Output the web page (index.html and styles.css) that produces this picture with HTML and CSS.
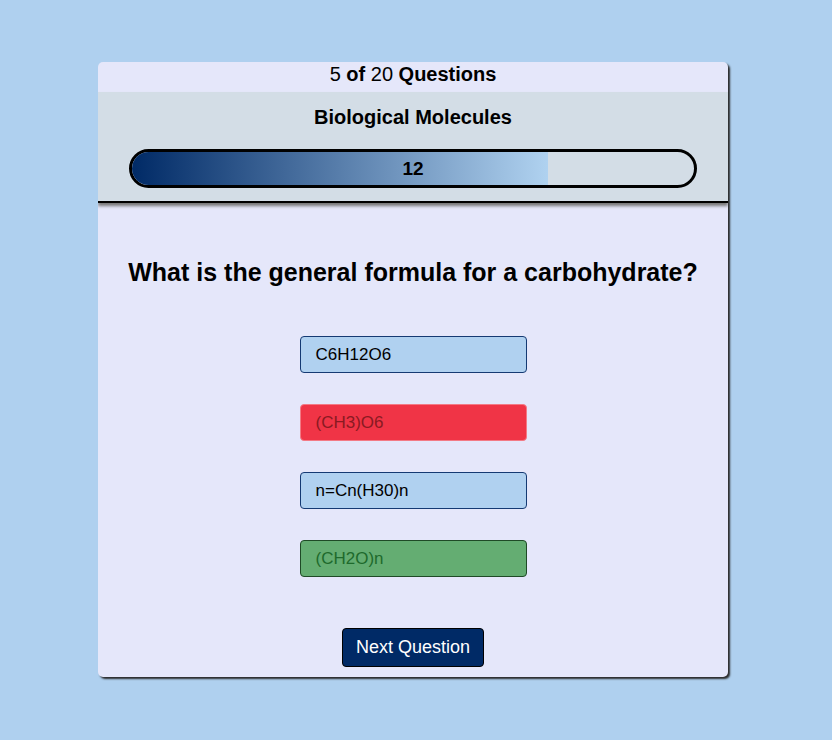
FILE: index.html
```html
<!DOCTYPE html>
<html>
<head>
<meta charset="utf-8">
<link rel="stylesheet" href="styles.css">
</head>
<body>
<div class="card">
  <div class="count"><span>5</span> <b>of</b> <span>20</span> <b>Questions</b></div>
  <div class="topic">
    <div class="topic-title">Biological Molecules</div>
    <div class="bar">
      <div class="fill" style="width:74%"></div>
      <div class="bar-label">12</div>
    </div>
  </div>
  <div class="body">
    <h1 class="question">What is the general formula for a carbohydrate?</h1>
    <div class="options">
      <div class="option">C6H12O6</div>
      <div class="option wrong">(CH3)O6</div>
      <div class="option">n=Cn(H30)n</div>
      <div class="option right">(CH2O)n</div>
    </div>
    <div class="actions"><button class="next">Next Question</button></div>
  </div>
</div>
</body>
</html>
```
FILE: styles.css
```css
html, body { margin: 0; padding: 0; }
body {
  background: #afd0ef;
  font-family: "Liberation Sans", Arial, sans-serif;
  width: 832px;
  height: 740px;
  overflow: hidden;
}
.card {
  width: 630px;
  margin: 62px 0 0 98px;
  background: #e5e7fa;
  border-radius: 5px;
  box-shadow: 2px 2px 2px #2a2a2a;
  overflow: hidden;
}
.count {
  height: 30px;
  line-height: 24px;
  text-align: center;
  font-size: 20px;
  color: #000;
}
.topic {
  background: #d3dde6;
  height: 109px;
  border-bottom: 2px solid #000;
  box-shadow: 0 3px 3px #777;
  position: relative;
  display: flex;
  flex-direction: column;
  align-items: center;
}
.topic-title {
  font-weight: bold;
  font-size: 20px;
  margin-top: 14px;
  height: 22px;
  line-height: 22px;
}
.bar {
  margin-top: 21px;
  width: 568px;
  height: 39px;
  box-sizing: border-box;
  border: 3px solid #000;
  border-radius: 20px;
  overflow: hidden;
  position: relative;
  background: #d3dde6;
}
.fill {
  height: 100%;
  background: linear-gradient(to right, #002a66, #b0d2f0);
}
.bar-label {
  position: absolute;
  inset: 0;
  text-align: center;
  line-height: 33px;
  font-weight: bold;
  font-size: 19px;
}
.body {
  display: flex;
  flex-direction: column;
  align-items: center;
  padding: 0 0 10px;
}
.question {
  margin: 54px 0 0;
  font-size: 25px;
  font-weight: bold;
  height: 30px;
  line-height: 30px;
  white-space: nowrap;
}
.options {
  margin-top: 49px;
  display: flex;
  flex-direction: column;
  gap: 31px;
}
.option {
  width: 227px;
  height: 37px;
  box-sizing: border-box;
  border: 1px solid #153a73;
  border-radius: 4px;
  background: #b0d1f0;
  font-size: 17px;
  line-height: 35px;
  padding-left: 15px;
  color: #000;
}
.option.wrong {
  background: #f03446;
  border-color: #f37a85;
  color: #8a1a22;
}
.option.right {
  background: #64ad72;
  border-color: #1f4a26;
  color: #1e6a2c;
}
.actions { margin-top: 51px; }
.next {
  width: 142px;
  height: 39px;
  background: #002a66;
  color: #fff;
  border: 1px solid #000;
  border-radius: 4px;
  font-family: "Liberation Sans", Arial, sans-serif;
  font-size: 18px;
  padding: 0;
}
```
